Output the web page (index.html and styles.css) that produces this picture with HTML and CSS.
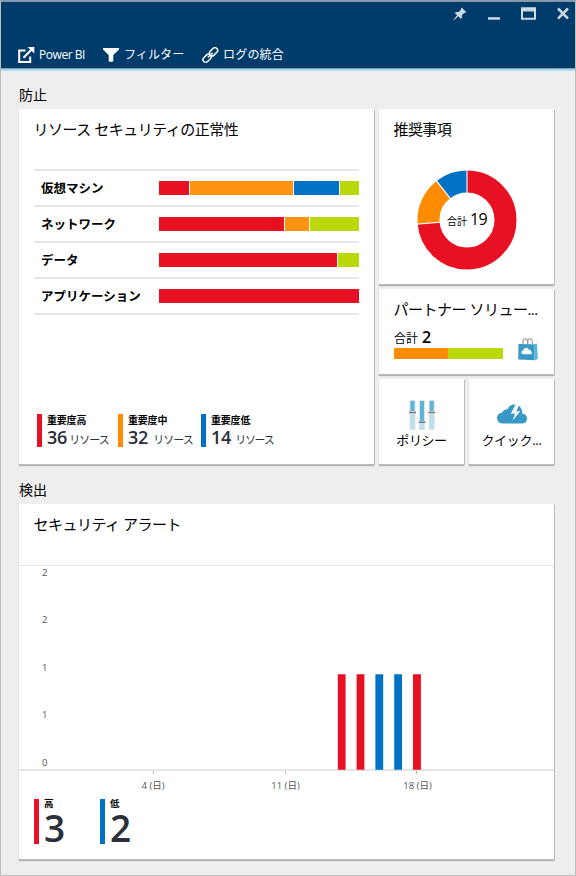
FILE: index.html
```html
<!DOCTYPE html>
<html lang="ja">
<head>
<meta charset="utf-8">
<title>セキュリティ</title>
<link rel="stylesheet" href="styles.css">
</head>
<body>
<div class="blade">
  <header class="header">
    <div class="controls">
      <svg width="14" height="14" viewBox="0 0 14 14"><path d="M8.6.6 13.2 5l-1 .9-.9-.1-2.4 2.5.1 2.4-1.2 1.1-2.6-2.5L.8 13.2l-.4-.4 3.700-4.600L1.800 5.900l1.100-1 2.700.1 2.500-2.400-.2-1z" fill="#ccd8e2"/></svg>
      <svg width="12" height="14" viewBox="0 0 12 14"><path d="M0 10.200h12v2.500H0z" fill="#ccd8e2"/></svg>
      <svg width="15" height="14" viewBox="0 0 15 14"><path fill-rule="evenodd" d="M0 .2h15v12.500H0zM2 4.500v6.200h11V4.500z" fill="#ccd8e2"/></svg>
      <svg width="12" height="14" viewBox="0 0 12 14"><path d="M1 1.500 11 11.700M11 1.500 1 11.700" stroke="#ccd8e2" stroke-width="2.600"/></svg>
    </div>
    <nav class="toolbar">
      <a class="tool power"><svg width="17" height="17" viewBox="0 0 17 17"><path d="M7.500 3.500H1.200V15h11V9.500" fill="none" stroke="#fff" stroke-width="2"/><path d="m5.500 10.700 7.600-7.700" stroke="#fff" stroke-width="2"/><path d="M9.600 0h6.700v6.600z" fill="#fff"/></svg><span>Power BI</span></a>
      <a class="tool filter"><svg width="16" height="14" viewBox="0 0 16 14"><path d="M0 0h16v1.500L10.300 7v6.200L8 14l-2.300-.8V7L0 1.500z" fill="#fff"/></svg><span>フィルター</span></a>
      <a class="tool logs"><svg width="17" height="17" viewBox="0 0 17 17"><g fill="none" stroke="#fff" stroke-width="1.500"><rect x="6.800" y="2.100" width="9.400" height="5.400" rx="2.700" transform="rotate(-45 11.500 4.800)"/><rect x=".4" y="8.500" width="9.400" height="5.400" rx="2.700" transform="rotate(-45 5.100 11.200)"/><path d="m6 10.300 4.600-4.600"/></g></svg><span>ログの統合</span></a>
    </nav>
  </header>
  <main class="content">
    <h2 class="section">防止</h2>
    <div class="tiles">
      <section class="card health">
        <h3 class="title health-title">リソース セキュリティの正常性</h3>
        <div class="rows">
          <div class="row"><span class="name">仮想マシン</span><div class="bar"><i class="red w30"></i><i class="orange w103"></i><i class="blue w45"></i><i class="green rest"></i></div></div>
          <div class="row"><span class="name">ネットワーク</span><div class="bar"><i class="red w125"></i><i class="orange w24"></i><i class="green rest"></i></div></div>
          <div class="row"><span class="name">データ</span><div class="bar"><i class="red w178"></i><i class="green rest"></i></div></div>
          <div class="row"><span class="name">アプリケーション</span><div class="bar"><i class="red rest"></i></div></div>
        </div>
        <div class="legend">
          <div class="severity"><i class="red"></i><div><b>重要度高</b><p><strong>36</strong><span>リソース</span></p></div></div>
          <div class="severity mid"><i class="amber"></i><div><b>重要度中</b><p><strong>32</strong><span>リソース</span></p></div></div>
          <div class="severity low"><i class="blue"></i><div><b>重要度低</b><p><strong>14</strong><span>リソース</span></p></div></div>
        </div>
      </section>
      <section class="card advice">
        <h3 class="title advice-title">推奨事項</h3>
        <div class="donut">
          <svg width="100" height="100" viewBox="-50 -50 100 100">
            <g fill="none" stroke-width="22">
              <circle r="38.500" pathLength="19" stroke="#e81123" stroke-dasharray="14 5" transform="rotate(-90)"/>
              <circle r="38.500" pathLength="19" stroke="#ff8c00" stroke-dasharray="3 16" transform="rotate(175.260)"/>
              <circle r="38.500" pathLength="19" stroke="#0072c6" stroke-dasharray="2 17" transform="rotate(232.100)"/>
            </g>
            <g stroke="#fff" stroke-width="1.100"><path d="M0-50V-27"/><path d="M0-50V-27" transform="rotate(265.260)"/><path d="M0-50V-27" transform="rotate(322.100)"/></g>
          </svg>
          <div class="total"><small>合計</small><span>19</span></div>
        </div>
      </section>
      <section class="card partner">
        <h3 class="title partner-title">パートナー ソリュー...</h3>
        <div class="partner-body">
          <div class="partner-data"><p><span>合計</span><strong>2</strong></p><div class="split"><i class="amber"></i><i class="green"></i></div></div>
          <svg width="20" height="23" viewBox="0 0 20 23"><path d="M5 7V3.500Q5 .7 7.200.7T9.500 3.500V7M9.800 6V3.500Q9.800.7 12 .7t2.300 2.800V6" fill="none" stroke="#999" stroke-width="1.100"/><path d="m.5 6 15.300.2.800 16L.2 21.400z" fill="#3999c6"/><path d="m15.800 6.200 3.200-.7.800 15.600-3.200 1.100z" fill="#59b4d9"/><path d="M5.400 16.200q-2-.1-2-1.900 0-1.700 1.700-1.900.5-2.700 2.900-2.700 2 0 2.700 1.900 2 0 2.200 1.600 1.100.3 1 1.500 0 1.500-1.800 1.500z" fill="#fff"/></svg>
        </div>
      </section>
      <section class="card small policy">
        <svg width="27" height="30" viewBox="0 0 27 30"><g fill="#e2e2e2"><path d="M.5 0h6v30h-6zM10 0h6v30h-6zM19.700 0h6v30h-6z"/></g><g fill="#b8dff0"><path d="M1.500 14h4v15h-4zM11 23h4v6h-4zM20.700 14h4v15h-4z"/></g><g fill="#59b4d9"><path d="M1.500 1h4v10h-4zM11 1h4v20h-4zM20.700 1h4v10h-4z"/></g><g fill="#7a7a7a"><path d="M0 11.800h7v1.500H0zM9.500 21.500h7V23h-7zM19.200 11.800h7v1.500h-7z"/></g></svg>
        <span>ポリシー</span>
      </section>
      <section class="card small quick">
        <svg width="30" height="20" viewBox="0 0 30 20"><path d="M5.500 19.500Q0 19 0 14q0-4.500 5-5.200Q6.500 5 10.500 5.200 12.500.5 17.500.5q7.200 0 8 9.300 4.500.7 4.500 5 0 4.200-4.500 4.700z" fill="#3999c6"/><path d="m18.800 0-5 9.800 4.300-.4-2.500 7L23.400 7l-4.100.5L22.500 0z" fill="#fff"/></svg>
        <span>クイック...</span>
      </section>
    </div>
    <h2 class="section detection">検出</h2>
    <section class="card alerts">
      <h3 class="title alerts-title">セキュリティ アラート</h3>
      <svg width="535" height="230" viewBox="0 0 535 230">
        <path d="M0 .5h535" stroke="#e5e5e5"/>
        <path d="M0 205h535" stroke="#e5e5e5" stroke-width="2"/>
        <path d="M134.500 206v3M266.500 206v3M397.500 206v3" stroke="#b5b5b5"/>
        <g class="axis"><text x="23" y="11">2</text><text x="23" y="58">2</text><text x="23" y="106">1</text><text x="23" y="153">1</text><text x="23" y="201">0</text></g>
        <g class="axis dates"><text x="134" y="224">4 (日)</text><text x="266.500" y="224">11 (日)</text><text x="398.500" y="224">18 (日)</text></g>
        <g fill="#e81123"><path d="M318.800 109.300h7.800v95.400h-7.800zM337.600 109.300h7.800v95.400h-7.800zM394 109.300h7.900v95.400H394z"/></g>
        <g fill="#0072c6"><path d="M356.400 109.300h7.800v95.400h-7.800zM375.200 109.300h7.800v95.400h-7.800z"/></g>
      </svg>
      <div class="counts">
        <div class="count"><i class="red"></i><div><b>高</b><strong>3</strong></div></div>
        <div class="count"><i class="blue"></i><div><b>低</b><strong>2</strong></div></div>
      </div>
    </section>
  </main>
</div>
</body>
</html>
```

FILE: styles.css
```css
* { box-sizing: border-box; }
body, h2, h3, p { margin: 0; }
body { font-family: "Open Sans", "Noto Sans CJK JP", sans-serif; color: #000; }
svg { display: block; flex: none; }
i { display: block; flex: none; }

.blade { width: 576px; height: 876px; background: #eee; border: 1px solid #bcbcbc; border-top: 2px solid #8799aa; }
.header { height: 69px; background: #003c6b; border-bottom: 2px solid #a5e0f5; box-shadow: inset 0 -1px #829aa8; padding-top: 5px; }
.controls { display: flex; justify-content: flex-end; padding-right: 6px; }
.controls svg + svg { margin-left: 21px; }
.toolbar { display: flex; margin: 25px 0 0 17px; height: 18px; align-items: center; color: #fff; font-size: 12px; line-height: 18px; white-space: nowrap; }
.tool { display: flex; align-items: center; gap: 4px; }
.power { width: 85px; letter-spacing: -.45px; }
.filter { width: 99px; letter-spacing: .1px; gap: 5px; }
.logs { letter-spacing: .2px; }

.content { padding: 0 18px; }
.section { height: 38px; padding-top: 13px; font-size: 14px; font-weight: 400; line-height: 22px; }
.detection { height: 40px; padding-top: 15px; }
.tiles { display: grid; grid-template-columns: 355px 85px 85px; grid-template-rows: 175px 85px 85px; gap: 5px; }
.card { background: #fff; box-shadow: 1px 1px #bbb, 0 2px 1px #b0b0b0; min-width: 0; }
.title { font-size: 15px; font-weight: 400; line-height: 22px; white-space: nowrap; padding: 9px 0 0 14.5px; }
.health { grid-row: 1 / 4; }
.health-title { letter-spacing: -.5px; }
.advice, .partner { grid-column: 2 / 4; }
.advice-title { letter-spacing: -.6px; }
.partner-title { letter-spacing: -.5px; }

.rows { margin: 29px 15px 0; border-bottom: 2px solid #e5e5e5; }
.row { height: 36px; border-top: 2px solid #e5e5e5; display: flex; align-items: center; padding-left: 7px; }
.name { width: 118px; padding-top: 2px; font-size: 12.5px; font-weight: 700; line-height: 20px; }
.bar { display: flex; width: 200px; height: 14px; gap: 1px; }
.red { background: #e81123; }
.orange { background: #ff9411; }
.amber { background: #ff8c00; }
.blue { background: #0072c6; }
.green { background: #bad80a; }
.rest { flex: 1; }
.w30 { width: 30px; }
.w103 { width: 103px; }
.w45 { width: 45px; }
.w125 { width: 125px; }
.w24 { width: 24px; }
.w178 { width: 178px; }

.legend { display: flex; margin: 99px 0 0 18px; }
.severity { display: flex; width: 81px; height: 33px; gap: 5px; white-space: nowrap; }
.severity i { width: 5px; height: 33px; }
.severity b { display: block; font-size: 10px; line-height: 13px; letter-spacing: -.2px; }
.severity p { display: flex; align-items: baseline; gap: 2px; line-height: 20px; color: #2b303a; }
.severity strong { font-size: 18px; font-weight: 600; letter-spacing: -.2px; }
.severity span { font-size: 11px; letter-spacing: -1px; }
.mid { width: 83px; }
.mid p { gap: 5px; }
.low p { gap: 4px; }
.low span { letter-spacing: -1.3px; }

.donut { display: grid; width: 100px; margin: 30px 0 0 38px; }
.donut > * { grid-area: 1 / 1; }
.total { display: flex; align-items: baseline; justify-content: center; align-self: center; gap: 3px; line-height: 22px; }
.total small { font-size: 10px; }
.total span { font-size: 16px; letter-spacing: -.6px; }
.partner-body { display: flex; padding-left: 15px; }
.partner-data { width: 124px; }
.partner-data p { display: flex; align-items: baseline; gap: 4px; font-size: 12px; line-height: 20px; height: 28px; padding-top: 7px; }
.partner-data strong { font-size: 16px; font-weight: 600; }
.partner-body svg { margin-top: 18px; }
.split { display: flex; height: 11px; width: 109px; }
.split i { width: 54px; }
.split .green { width: 55px; }
.small { display: flex; flex-direction: column; align-items: center; font-size: 13px; }
.small span { line-height: 20px; white-space: nowrap; letter-spacing: -.4px; }
.policy svg { margin-top: 21px; margin-left: 2px; }
.quick svg { margin-top: 25px; margin-left: 1px; }
.quick span { margin-top: 6px; letter-spacing: -.3px; }

.alerts { width: 535px; height: 355px; }
.alerts-title { height: 61px; letter-spacing: -.5px; }
.axis { font-size: 9.5px; fill: #555; }
.dates { text-anchor: middle; }
.counts { display: flex; margin: 4px 0 0 15px; }
.count { display: flex; width: 66px; gap: 5px; }
.count i { width: 5px; height: 45px; }
.count b { display: block; font-size: 9.5px; line-height: 10px; }
.count strong { display: block; font-size: 37px; font-weight: 600; line-height: 38px; color: #2b303a; }
```
